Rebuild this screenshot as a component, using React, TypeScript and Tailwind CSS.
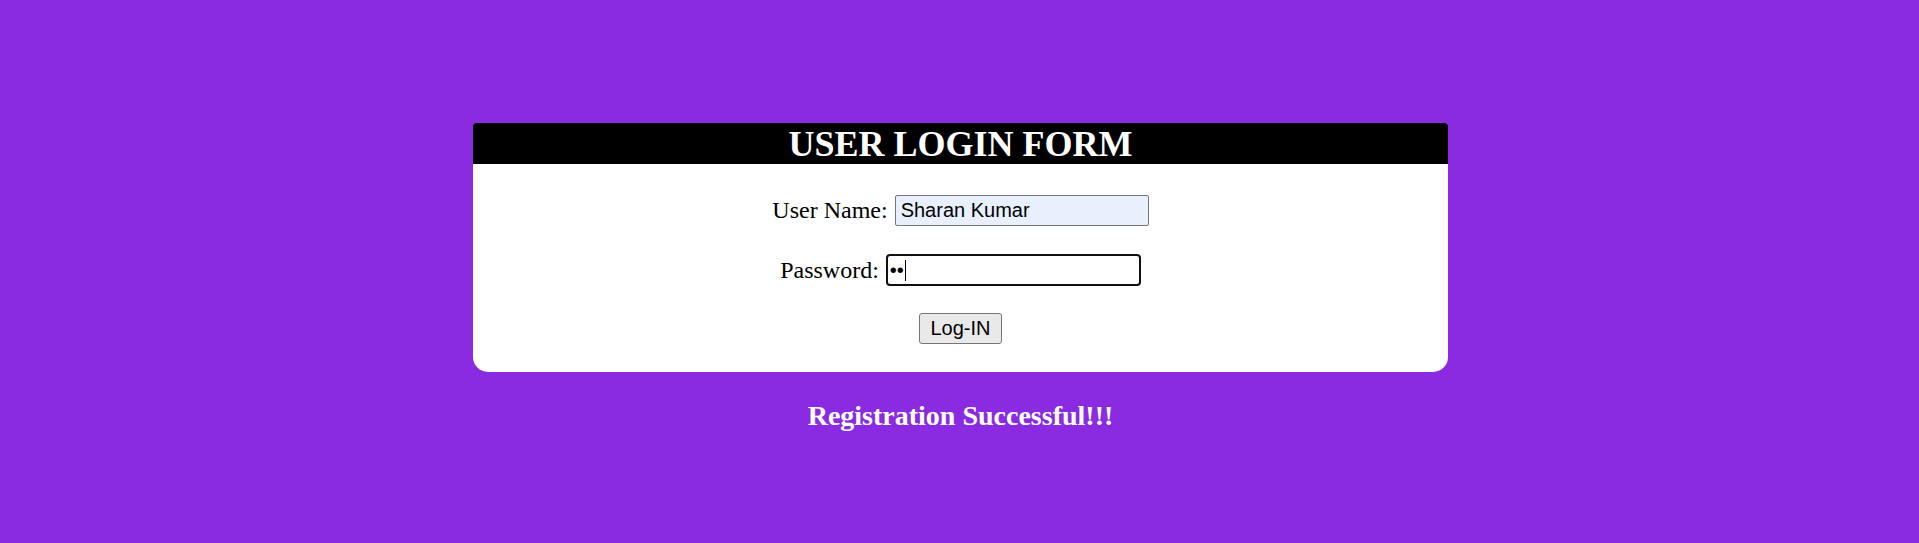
import React from "react";

export default function App() {
  const serif = "font-['Liberation_Serif','Times_New_Roman',serif]";
  const sans = "font-['Liberation_Sans',Arial,sans-serif]";
  return (
    <div className={`min-h-screen w-full bg-[#8a2be2] pt-[123px] pl-[2px] ${serif}`}>
      <div className="mx-auto flex w-[975px] flex-col overflow-hidden rounded-t-[3px] rounded-b-[15px] bg-white">
        <div className="flex h-[41px] items-center justify-center bg-black">
          <h1 className={`m-0 text-[36px] font-bold leading-[40px] text-white ${serif}`}>
            USER LOGIN FORM
          </h1>
        </div>
        <div className="flex flex-col items-center pt-[31px] pb-[28px]">
          <div className="flex h-[31px] items-center gap-[7px]">
            <label className="text-[24px] leading-[27px] text-black">User Name:</label>
            <input
              type="text"
              readOnly
              value="Sharan Kumar"
              className={`box-border h-[31px] w-[254px] rounded-[2px] border border-[#767676] bg-[#e8f0fe] pl-[5px] text-[20px] leading-[23px] text-black outline-none ${sans}`}
            />
          </div>
          <div className="mt-[28px] flex h-[32px] items-center gap-[7px]">
            <label className="text-[24px] leading-[27px] text-black">Password:</label>
            <div className="relative box-border flex h-[32px] w-[255px] items-center rounded-[4px] border-2 border-[#101010] bg-white pl-[2px]">
              <span className={`text-[20px] leading-[23px] text-black ${sans}`}>••</span>
              <span className="ml-[1px] h-[21px] w-[1px] bg-black" />
            </div>
          </div>
          <button
            type="button"
            className={`mt-[27px] box-border flex h-[31px] w-[83px] items-center justify-center rounded-[3px] border border-[#767676] bg-[#e9e9e9] text-[20px] leading-[23px] text-black ${sans}`}
          >
            Log-IN
          </button>
        </div>
      </div>
      <p className={`mt-[28px] text-center text-[28px] font-bold leading-[31px] text-white ${serif}`}>
        Registration Successful!!!
      </p>
    </div>
  );
}
